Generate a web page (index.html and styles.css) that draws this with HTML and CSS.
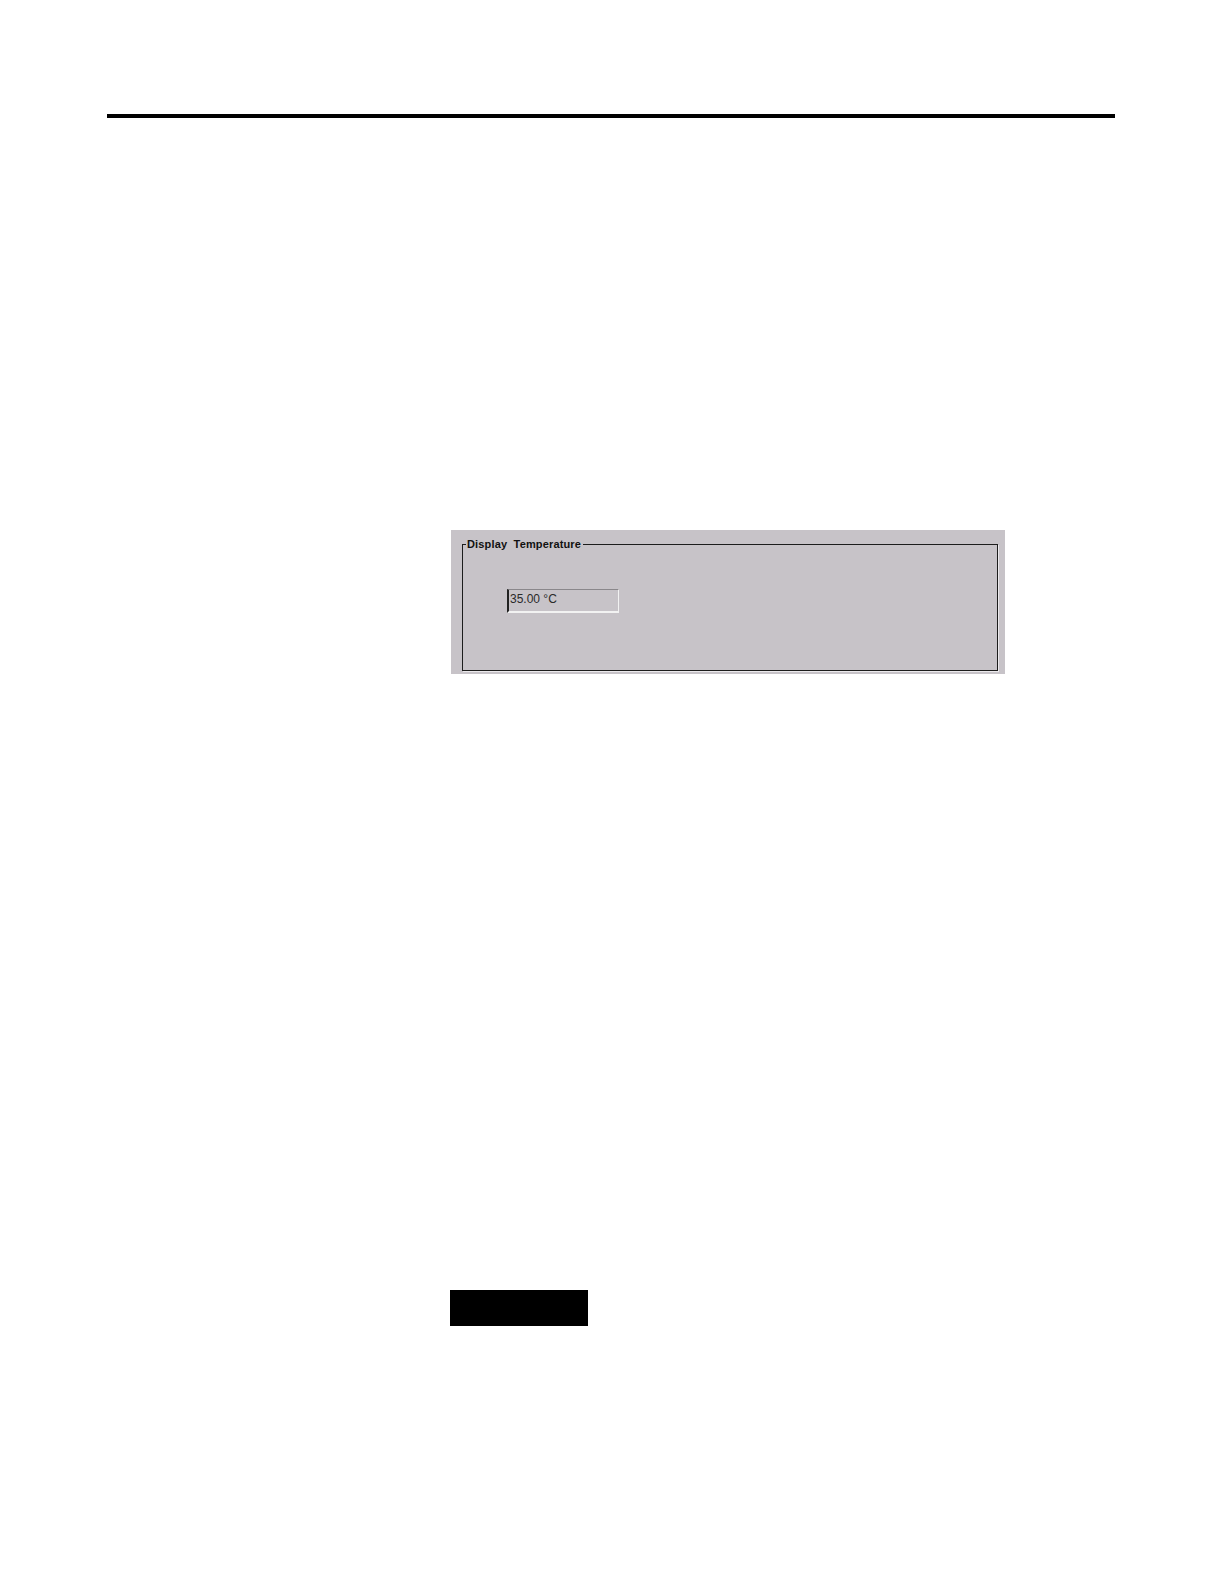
FILE: index.html
```html
<!DOCTYPE html>
<html>
<head>
<meta charset="utf-8">
<link rel="stylesheet" href="styles.css">
</head>
<body>
<div class="page">
  <div class="rule"></div>
  <div class="panel">
    <div class="frame">
      <div class="legend">Display&nbsp; Temperature</div>
      <div class="field">35.00 °C</div>
    </div>
  </div>
  <div class="blackbox"></div>
</div>
</body>
</html>
```
FILE: styles.css
```css
html, body {
  margin: 0;
  padding: 0;
  background: #ffffff;
}
.page {
  width: 1224px;
  height: 1584px;
  display: flex;
  flex-direction: column;
  font-family: "Liberation Sans", Arial, sans-serif;
}
.rule {
  margin: 114px 0 0 107px;
  width: 1008px;
  height: 4px;
  background: #000;
}
.panel {
  margin: 412px 0 0 451px;
  width: 554px;
  height: 144px;
  box-sizing: border-box;
  padding: 14px 7px 3px 11px;
  background: #c7c3c8;
}
.frame {
  height: 127px;
  box-sizing: border-box;
  border: 1px solid #1c1c1c;
  box-shadow: 1px 1px 0 #ebe9ec;
  display: flex;
  flex-direction: column;
  align-items: flex-start;
}
.legend {
  margin: -7px 0 0 3px;
  padding: 0 2px 0 1px;
  background: #c7c3c8;
  font-size: 11px;
  line-height: 13px;
  font-weight: bold;
  letter-spacing: 0.15px;
  color: #111;
  white-space: nowrap;
}
.field {
  margin: 38px 0 0 44px;
  width: 112px;
  height: 24px;
  box-sizing: border-box;
  border-left: 2px solid #222;
  border-top: 1px solid #8a878b;
  border-right: 1px solid #f2f2f2;
  border-bottom: 2px solid #f2f2f2;
  padding-left: 1px;
  font-size: 12px;
  line-height: 19px;
  color: #2a2a2a;
}
.blackbox {
  margin: 616px 0 0 450px;
  width: 138px;
  height: 36px;
  background: #000;
}
```
